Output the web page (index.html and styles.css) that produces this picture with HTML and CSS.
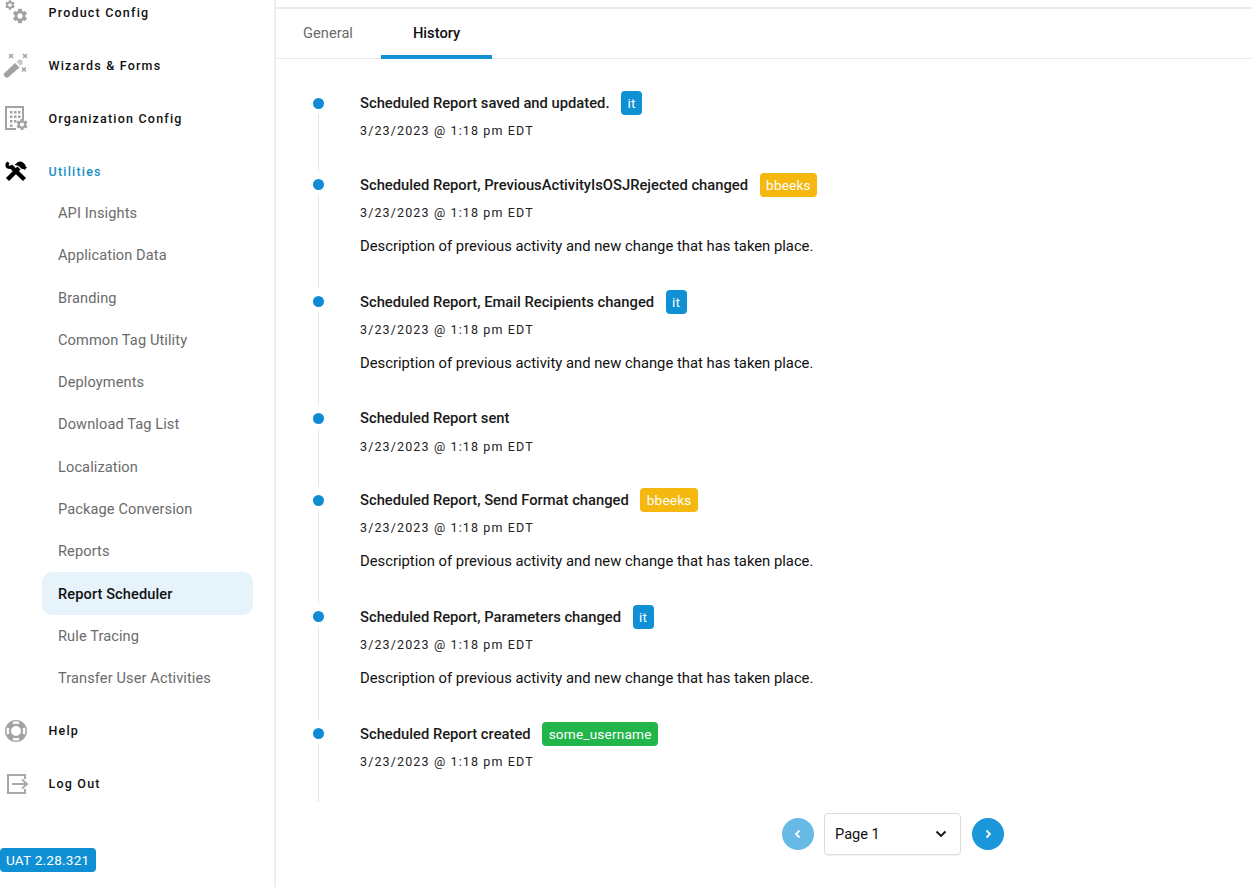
FILE: index.html
```html
<!DOCTYPE html>
<html lang="en">
<head>
<meta charset="utf-8">
<title>Report Scheduler</title>
<link rel="stylesheet" href="styles.css">
</head>
<body>
<svg class="defs" width="0" height="0" aria-hidden="true">
  <defs>
    <symbol id="gear" viewBox="0 0 24 24"><path fill-rule="evenodd" d="M19.14 12.94c.04-.3.06-.61.06-.94 0-.32-.02-.64-.07-.94l2.03-1.58c.18-.14.23-.41.12-.61l-1.92-3.32c-.12-.22-.37-.29-.59-.22l-2.39.96c-.5-.38-1.03-.7-1.62-.94l-.36-2.54c-.04-.24-.24-.41-.48-.41h-3.84c-.24 0-.43.17-.47.41l-.36 2.54c-.59.24-1.13.57-1.62.94l-2.39-.96c-.22-.08-.47 0-.59.22L2.74 8.87c-.12.21-.08.47.12.61l2.03 1.58c-.05.3-.09.63-.09.94s.02.64.07.94l-2.03 1.58c-.18.14-.23.41-.12.61l1.92 3.32c.12.22.37.29.59.22l2.39-.96c.5.38 1.03.7 1.62.94l.36 2.54c.05.24.24.41.48.41h3.84c.24 0 .44-.17.47-.41l.36-2.54c.59-.24 1.13-.56 1.62-.94l2.39.96c.22.08.47 0 .59-.22l1.92-3.32c.12-.22.07-.47-.12-.61l-2.01-1.58zM12 15.6c-1.98 0-3.6-1.62-3.6-3.6s1.62-3.6 3.6-3.6 3.6 1.62 3.6 3.6-1.62 3.6-3.6 3.6z"/></symbol>
  </defs>
</svg>
<div class="app">
  <aside class="sidebar">
    <nav class="nav">
      <a class="nav-item">
        <svg class="nav-icon" viewBox="0 0 32 32"><use href="#gear" x="4" y="3" width="12" height="12"/><use href="#gear" x="11" y="11" width="18" height="18"/></svg>
        <span>Product Config</span>
      </a>
      <a class="nav-item">
        <svg class="nav-icon" viewBox="0 0 32 32"><path d="M4 24.500 15 14l4.500 4.500L8 28.500q-1 .5-2 0l-2-2q-.5-1 0-2z"/><path d="M16.500 12.500 19 10.500q1-.5 2 0l1.500 1.500q.5 1 0 2l-2 3z" class="pale"/><path class="thin" d="M9 5l4 4M13 5l-4 4M23 5l4 4M27 5l-4 4M22 18.500l4 4M26 18.500l-4 4"/></svg>
        <span>Wizards &amp; Forms</span>
      </a>
      <a class="nav-item">
        <svg class="nav-icon" viewBox="0 0 32 32"><path fill-rule="evenodd" d="M5 4h19v14h-2V6H7v20h9v2H5z"/><path d="M10 9h2.500v2.500H10zM14 9h2.500v2.500H14zM18 9h2.500v2.500H18zM10 13.500h2.500V16H10zM14 13.500h2.500V16H14zM18 13.500h2.500V16H18zM10 18h2.500v2.500H10zM14 18h2.500v2.500H14zM10 22.500h2.500V25H10z"/><use href="#gear" x="15" y="15.500" width="14" height="14"/></svg>
        <span>Organization Config</span>
      </a>
      <a class="nav-item is-open">
        <svg class="nav-icon" viewBox="0 0 32 32"><path class="bar" d="M7.500 24.500 19 13M10.500 11 24.500 24.500"/><path d="M14.500 10 18 7q3-1 5 .5l2.500 2.500v1.500l1.500 1-2.500 2.500-1-1h-1.500L19 11.500l-1.500-1z"/><path d="M5.500 8.500 7.500 6.500 9.500 8.500 8.500 10l1 1 1.500-1 1 1.500-2 2.500q-4 0-4.500-3z"/></svg>
        <span>Utilities</span>
      </a>
      <ul class="subnav">
        <li><a class="sub-item">API Insights</a></li>
        <li><a class="sub-item">Application Data</a></li>
        <li><a class="sub-item">Branding</a></li>
        <li><a class="sub-item">Common Tag Utility</a></li>
        <li><a class="sub-item">Deployments</a></li>
        <li><a class="sub-item">Download Tag List</a></li>
        <li><a class="sub-item">Localization</a></li>
        <li><a class="sub-item">Package Conversion</a></li>
        <li><a class="sub-item">Reports</a></li>
        <li><a class="sub-item is-active">Report Scheduler</a></li>
        <li><a class="sub-item">Rule Tracing</a></li>
        <li><a class="sub-item">Transfer User Activities</a></li>
      </ul>
      <a class="nav-item">
        <svg class="nav-icon" viewBox="0 0 32 32"><path fill-rule="evenodd" d="M16 5a11 11 0 1 0 0 22 11 11 0 0 0 0-22zm0 6a5 5 0 1 1 0 10 5 5 0 0 1 0-10z"/><path class="cut" d="M13 8.200a8.300 8.300 0 0 1 6 0M13 23.800a8.300 8.300 0 0 0 6 0M8.200 13a8.300 8.300 0 0 0 0 6M23.800 13a8.300 8.300 0 0 1 0 6"/></svg>
        <span>Help</span>
      </a>
      <a class="nav-item">
        <svg class="nav-icon" viewBox="0 0 32 32"><path class="line" d="M25 11V7H8v18h17v-4"/><path class="line" d="M12 16h15M22 11.500 27 16l-5 4.500"/></svg>
        <span>Log Out</span>
      </a>
    </nav>
    <div class="version">UAT 2.28.321</div>
  </aside>
  <main class="main">
    <div class="tabs">
      <a class="tab">General</a>
      <a class="tab is-current">History</a>
    </div>
    <ol class="timeline">
      <li class="event">
        <div class="event-title">Scheduled Report saved and updated.<span class="tag tag-blue">it</span></div>
        <div class="event-date">3/23/2023 @ 1:18 pm EDT</div>
      </li>
      <li class="event">
        <div class="event-title">Scheduled Report, PreviousActivityIsOSJRejected changed<span class="tag tag-yellow">bbeeks</span></div>
        <div class="event-date">3/23/2023 @ 1:18 pm EDT</div>
        <p class="event-desc">Description of previous activity and new change that has taken place.</p>
      </li>
      <li class="event">
        <div class="event-title">Scheduled Report, Email Recipients changed<span class="tag tag-blue">it</span></div>
        <div class="event-date">3/23/2023 @ 1:18 pm EDT</div>
        <p class="event-desc">Description of previous activity and new change that has taken place.</p>
      </li>
      <li class="event">
        <div class="event-title">Scheduled Report sent</div>
        <div class="event-date">3/23/2023 @ 1:18 pm EDT</div>
      </li>
      <li class="event">
        <div class="event-title">Scheduled Report, Send Format changed<span class="tag tag-yellow">bbeeks</span></div>
        <div class="event-date">3/23/2023 @ 1:18 pm EDT</div>
        <p class="event-desc">Description of previous activity and new change that has taken place.</p>
      </li>
      <li class="event">
        <div class="event-title">Scheduled Report, Parameters changed<span class="tag tag-blue">it</span></div>
        <div class="event-date">3/23/2023 @ 1:18 pm EDT</div>
        <p class="event-desc">Description of previous activity and new change that has taken place.</p>
      </li>
      <li class="event">
        <div class="event-title">Scheduled Report created<span class="tag tag-green">some_username</span></div>
        <div class="event-date">3/23/2023 @ 1:18 pm EDT</div>
      </li>
    </ol>
    <div class="pager">
      <button class="page-btn is-disabled" aria-label="Previous"><svg viewBox="0 0 12 12"><path d="M7.500 2.500 4 6l3.500 3.500"/></svg></button>
      <div class="page-select">
        <span>Page 1</span>
        <svg viewBox="0 0 12 12"><path d="M1.500 3.500 6 8l4.500-4.500"/></svg>
      </div>
      <button class="page-btn page-next" aria-label="Next"><svg viewBox="0 0 12 12"><path d="M4.500 2.500 8 6l-3.500 3.500"/></svg></button>
    </div>
  </main>
</div>
</body>
</html>
```
FILE: styles.css
```css
* { box-sizing: border-box; }
html, body { margin: 0; padding: 0; height: 100%; overflow: hidden; }
body { font-family: Roboto, "Liberation Sans", sans-serif; background: #fff; color: #111; }
.defs { position: absolute; }
.app { display: flex; height: 887px; }

.sidebar { width: 276px; flex: none; border-right: 2px solid #eeeeee; display: flex; flex-direction: column; overflow: hidden; }
.nav { margin-top: -14.500px; display: flex; flex-direction: column; }
.nav-item { height: 53px; display: flex; align-items: center; gap: 16.500px; font-size: 12.500px; font-weight: 500; letter-spacing: 1.200px; color: #111; flex: none; }
.nav-item.is-open { color: #1b8fc4; }
.nav-icon { width: 32px; height: 32px; flex: none; fill: #a2a2a2; }
.nav-icon .pale { fill: #c8c8c8; }
.nav-icon .thin { fill: none; stroke: #a2a2a2; stroke-width: 1.500; }
.nav-icon .cut { fill: none; stroke: #fff; stroke-width: 2.500; }
.nav-icon .line { fill: none; stroke: #a8a8a8; stroke-width: 2; }
.nav-icon .bar { fill: none; stroke: #000; stroke-width: 4.500; }
.is-open .nav-icon { fill: #000; }

.subnav { list-style: none; margin: -5.500px 0 5px; padding: 0 21px 0 42px; }
.sub-item { display: flex; align-items: center; height: 42.270px; padding-left: 16px; font-size: 14.600px; letter-spacing: .1px; color: #6b6b6b; border-radius: 10px; }
.sub-item.is-active { background: #e6f3fa; color: #111; font-weight: 500; }

.version { margin-top: 37.500px; align-self: flex-start; height: 24px; padding: 0 7px 0 6px; display: flex; align-items: center; background: #0f90d4; color: #fff; font-size: 13.600px; border-radius: 4px; letter-spacing: .2px; }

.main { flex: 1; min-width: 0; display: flex; flex-direction: column; padding-top: 7px; }
.tabs { display: flex; height: 52px; border-top: 2px solid #e8e8e8; border-bottom: 1px solid #e8e8e8; }
.tab { height: 50px; display: flex; align-items: center; padding: 2px 28px 0 27px; font-size: 14.700px; color: #6b6b6b; border-bottom: 4px solid transparent; }
.tab.is-current { padding: 2px 32px 0; color: #111; font-weight: 500; border-bottom-color: #1390d5; }

.timeline { list-style: none; margin: 30.500px 0 0; padding: 0 0 0 42px; }
.event { position: relative; padding-left: 42px; padding-bottom: 27.100px; }
.event::before { content: ""; position: absolute; left: -5.500px; top: 8px; width: 11px; height: 11px; border-radius: 50%; background: #0f8bd3; }
.event::after { content: ""; position: absolute; left: 0; top: 24px; bottom: 0; width: 1px; background: #e3e3e3; }
.event-title { height: 27px; display: flex; align-items: center; font-size: 14.760px; font-weight: 500; color: #1a1a1a; }
.tag { margin-left: 11.500px; height: 24px; padding: 0 6.500px; display: inline-flex; align-items: center; border-radius: 4px; color: #fff; font-size: 13.600px; font-weight: 400; letter-spacing: .2px; }
.tag-blue { background: #0f90d4; }
.tag-yellow { background: #f4b80f; }
.tag-green { background: #22b54a; }
.event-date { margin-top: .700px; height: 27px; display: flex; align-items: center; font-size: 12.500px; letter-spacing: 1.130px; color: #222; }
.event-desc { margin: 6.300px 0 1.700px; height: 27px; display: flex; align-items: center; font-size: 14.800px; color: #111; }

.pager { margin: 11px 0 0 506px; display: flex; align-items: center; gap: 10px; }
.page-btn { width: 32px; height: 32px; border: 0; padding: 0; border-radius: 50%; background: #1a97d8; display: flex; align-items: center; justify-content: center; }
.page-btn.is-disabled { background: #68bae6; }
.page-next { margin-left: 1px; }
.page-btn svg { width: 12px; height: 12px; fill: none; stroke: #fff; stroke-width: 1.800; }
.page-select { width: 137px; height: 42px; border: 1px solid #dcdcdc; border-radius: 4px; display: flex; align-items: center; justify-content: space-between; padding: 1px 13px 0 10px; font-size: 14.600px; color: #111; box-shadow: 0 1px 1px rgba(0,0,0,.05); }
.page-select svg { width: 12px; height: 12px; fill: none; stroke: #111; stroke-width: 1.800; }
```
